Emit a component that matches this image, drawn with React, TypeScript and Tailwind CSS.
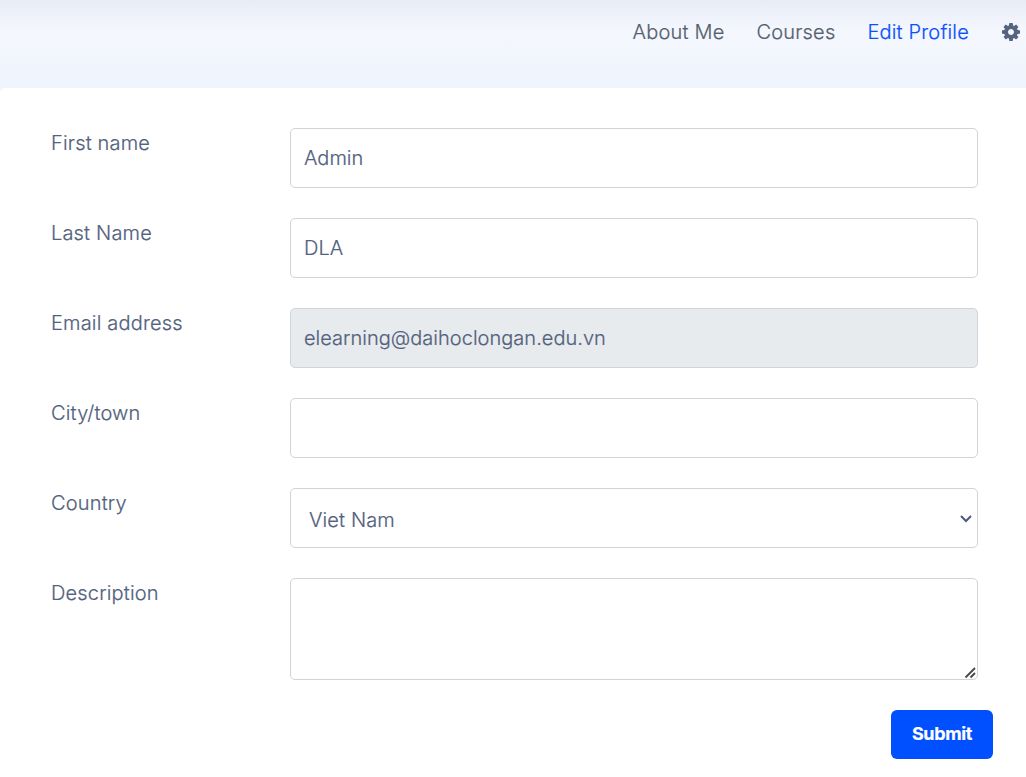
import type { ReactNode } from "react";

const field = "flex h-[60px] w-[688px] items-center rounded-[5px] border border-[#cfd3da] px-[13px]";

function Row({ label, children }: { label: string; children: ReactNode }) {
  return (
    <div className="flex">
      <div className="w-[239px] leading-[30px] tracking-[0.17px]">{label}</div>
      {children}
    </div>
  );
}

function Cog() {
  return (
    <svg className="mr-[6px] size-[18px] text-[#56647f]" viewBox="0 128 1536 1536" fill="currentColor">
      <path d="M1024 896q0-106-75-181t-181-75-181 75-75 181 75 181 181 75 181-75 75-181zm512-109v222q0 12-8 23t-20 13l-185 28q-19 54-39 91 35 50 107 138 10 12 10 25t-9 23q-27 37-99 108t-94 71q-12 0-26-9l-138-108q-44 23-91 38-16 136-29 186-7 28-36 28h-222q-14 0-24.5-8.5t-11.5-21.5l-28-184q-49-16-90-37l-141 107q-10 9-25 9-14 0-25-11-126-114-165-168-7-10-7-23 0-12 8-23 15-21 51-66.5t54-70.5q-27-50-41-99l-183-27q-13-2-21-12.5t-8-23.5v-222q0-12 8-23t19-13l186-28q14-46 39-92-40-57-107-138-10-12-10-24 0-10 9-23 26-36 98.5-107.5t94.5-71.5q13 0 26 10l138 107q44-23 91-38 16-136 29-186 7-28 36-28h222q14 0 24.5 8.5t11.5 21.5l28 184q49 16 90 37l142-107q9-9 24-9 13 0 25 10 129 119 165 170 7 8 7 22 0 12-8 23-15 21-51 66.5t-54 70.5q26 50 41 98l183 28q13 2 21 12.5t8 23.5z" />
    </svg>
  );
}

export default function App() {
  return (
    <div className="h-[777px] w-[1026px] overflow-hidden bg-[#f0f4fc] font-['Inter',sans-serif] text-[20px] font-light text-[#52617d] [-webkit-text-stroke:0.2px]">
      <header className="flex h-[88px] items-start justify-end bg-linear-to-b from-[#e8ecf5] via-[#f4f7fe] via-35% to-[#eff3fb] pt-[17px] leading-[30px]">
        <nav className="flex items-center tracking-[0.19px] text-[#54606f]">
          <span className="mr-8">About Me</span>
          <span className="mr-8">Courses</span>
          <span className="mr-[33px] text-[#0b50fa]">Edit Profile</span>
          <Cog />
        </nav>
      </header>
      <main className="h-[689px] rounded-tl-[5px] bg-white pt-10 pl-[51px]">
        <div className="flex flex-col gap-[30px]">
          <Row label="First name"><div className={field}>Admin</div></Row>
          <Row label="Last Name"><div className={field}>DLA</div></Row>
          <Row label="Email address">
            <div className="flex h-[60px] w-[688px] items-center rounded-[5px] border border-[#cfd3da] bg-[#e8ebee] px-[13px] tracking-[0.02px]">elearning@daihoclongan.edu.vn</div>
          </Row>
          <Row label="City/town"><div className={field} /></Row>
          <Row label="Country">
            <div className="flex h-[60px] w-[688px] items-center justify-between rounded-[5px] border border-[#cfd3da] pt-[3px] pr-[5px] pl-[18px]">
              <span className="tracking-[0.12px]">Viet Nam</span>
              <svg className="mb-[2px] h-[8px] w-[12px]" viewBox="0 0 12 8" fill="none" stroke="#4d5a7c" strokeWidth="2">
                <path d="M1 1l5 5 5-5" />
              </svg>
            </div>
          </Row>
          <Row label="Description">
            <div className="relative">
              <textarea className="block h-[102px] w-[688px] resize-none rounded-[5px] border border-[#cfd3da] px-[13px] py-2" />
              <svg className="absolute right-[2px] bottom-[1px] size-[12px]" viewBox="0 0 12 12" fill="none" stroke="#484848" strokeWidth="1.8">
                <path d="M1.5 10.5L11 1M6.5 10.5L11 6" />
              </svg>
            </div>
          </Row>
        </div>
        <div className="mt-[30px] flex justify-end pr-[33px]">
          <button className="h-[49px] w-[102px] rounded-[6px] bg-[#0150ff] pb-[2px] text-[18px] font-bold tracking-[-0.35px] text-white">Submit</button>
        </div>
      </main>
    </div>
  );
}
